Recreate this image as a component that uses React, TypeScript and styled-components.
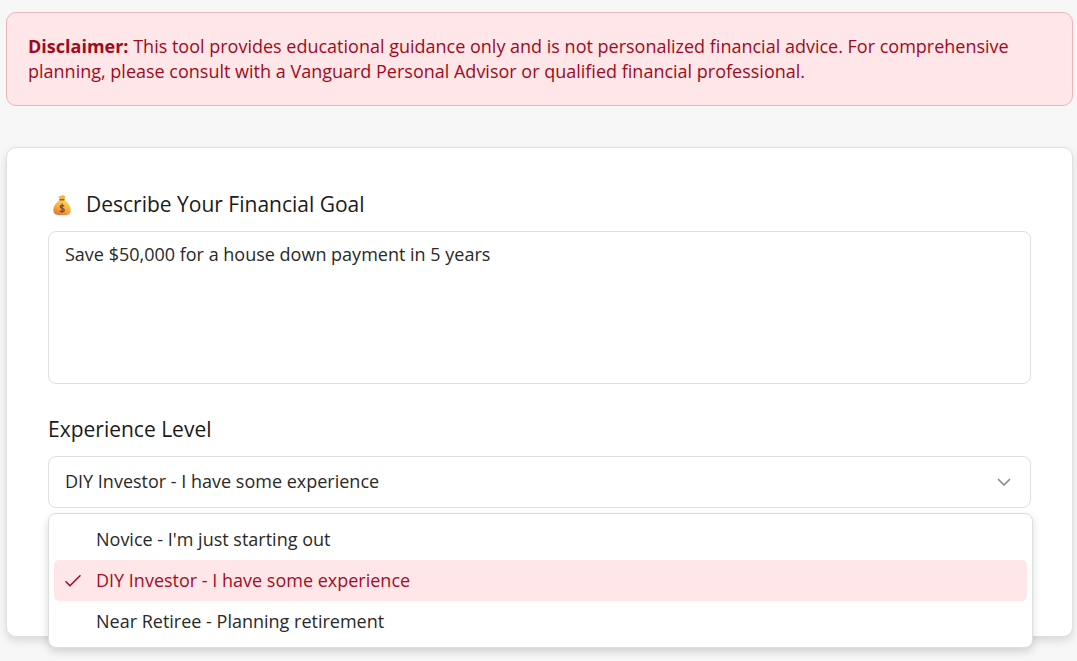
import React, { useState } from "react";
import styled, { createGlobalStyle } from "styled-components";

const GlobalStyle = createGlobalStyle`
  *, *::before, *::after { box-sizing: border-box; }
  body {
    margin: 0;
    background: #f7f7f7;
    color: #292929;
    font: 400 18px/25px "Open Sans", "Noto Sans", sans-serif;
  }
`;

const Page = styled.main`
  display: flex;
  flex-direction: column;
  gap: 41px;
  padding: 12px 4px 24px 6px;
`;

const Disclaimer = styled.p`
  margin: 0;
  padding: 21px;
  border: 1px solid #eeb4bb;
  border-radius: 10px;
  background: #ffe6e8;
  color: #9f0a20;
`;

const Card = styled.form`
  display: flex;
  flex-direction: column;
  gap: 31px;
  padding: 42px 41px 128px;
  border: 1px solid #e0e0e0;
  border-radius: 10px;
  background: #fff;
  box-shadow: 0 4px 8px rgba(0, 0, 0, 0.12);
`;

const Field = styled.div`
  display: flex;
  flex-direction: column;
  gap: 12px;
`;

const Label = styled.label`
  display: flex;
  align-items: center;
  gap: 10px;
  color: #1a1a1a;
  font-size: 21px;
  font-weight: 500;
  line-height: 29px;
`;

const GoalInput = styled.textarea`
  display: block;
  width: 100%;
  height: 153px;
  padding: 10px 16px;
  border: 1px solid #dedfe0;
  border-radius: 8px;
  outline: none;
  resize: none;
  background: #fff;
  color: inherit;
  font: inherit;
`;

const SelectBox = styled.div`
  position: relative;
  display: grid;
  align-items: center;
`;

const Select = styled.select`
  grid-area: 1 / 1;
  width: 100%;
  height: 52px;
  padding: 0 48px 2px 16px;
  border: 1px solid #dedfe0;
  border-radius: 8px;
  outline: none;
  appearance: none;
  background: #fff;
  color: inherit;
  font: inherit;
`;

const Chevron = styled.svg`
  grid-area: 1 / 1;
  justify-self: end;
  margin-right: 17px;
  pointer-events: none;
`;

const Menu = styled.div`
  position: absolute;
  top: calc(100% + 5px);
  left: 0;
  right: -2px;
  display: flex;
  flex-direction: column;
  padding: 5px;
  border: 1px solid #dedede;
  border-radius: 8px;
  background: #fff;
  box-shadow: 0 4px 8px rgba(0, 0, 0, 0.15);
`;

const MenuItem = styled.button<{ $selected: boolean }>`
  display: grid;
  grid-template-columns: 20px 1fr;
  align-items: center;
  column-gap: 14px;
  padding: 8px;
  border: 0;
  border-radius: 5px;
  background: ${({ $selected }) => ($selected ? "#ffe6e8" : "transparent")};
  color: ${({ $selected }) => ($selected ? "#a30d24" : "inherit")};
  font: inherit;
  text-align: left;
  cursor: pointer;
`;

const ItemText = styled.span`
  grid-column: 2;
`;

const MoneyBag = () => (
  <svg width="28" height="28" viewBox="0 0 28 28" aria-hidden="true">
    <defs>
      <linearGradient id="bag" x1="0.8" y1="0.1" x2="0.35" y2="1">
        <stop offset="0" stopColor="#ffd34f" />
        <stop offset="0.55" stopColor="#f8ad38" />
        <stop offset="1" stopColor="#e47b3d" />
      </linearGradient>
    </defs>
    <path d="M10.5 5.5c1.2.3 2-.2 2.5-1.2.8.4 1.5.2 2.1-.5.2.9.8 1.4 2.4 1.4l-1.6 4h-3.8z" fill="#f8b239" />
    <path d="M12 9h4c3.4 2 6.7 5.700 6.700 10.100 0 3.500-1.800 4.900-4.700 4.900h-8c-2.900 0-4.700-1.500-4.700-4.900C5.300 14.700 8.600 11 12 9z" fill="url(#bag)" />
    <path d="M12 8.700h4" stroke="#a65b45" strokeWidth="1.600" strokeLinecap="round" />
    <path d="M16.200 15.100c-.6-1-3.900-1.300-4 .7-.1 2.100 4.100 1.200 4.100 3.400 0 2-3.700 1.900-4.500.5M14.100 12.600v9.200" fill="none" stroke="#81483d" strokeWidth="1.300" />
  </svg>
);

const levels = [
  "Novice - I'm just starting out",
  "DIY Investor - I have some experience",
  "Near Retiree - Planning retirement",
];

export default function App() {
  const [goal, setGoal] = useState("Save $50,000 for a house down payment in 5 years");
  const [level, setLevel] = useState(levels[1]);
  const [open, setOpen] = useState(true);

  return (
    <>
      <GlobalStyle />
      <Page>
        <Disclaimer>
          <strong>Disclaimer:</strong> This tool provides educational guidance only and is not
          personalized financial advice. For comprehensive planning, please consult with a Vanguard
          Personal Advisor or qualified financial professional.
        </Disclaimer>
        <Card onSubmit={(e) => e.preventDefault()}>
          <Field>
            <Label htmlFor="goal">
              <MoneyBag />
              Describe Your Financial Goal
            </Label>
            <GoalInput
              id="goal"
              spellCheck={false}
              value={goal}
              onChange={(e) => setGoal(e.target.value)}
            />
          </Field>
          <Field>
            <Label htmlFor="level">Experience Level</Label>
            <SelectBox>
              <Select
                id="level"
                value={level}
                onChange={(e) => setLevel(e.target.value)}
                onMouseDown={(e) => {
                  e.preventDefault();
                  setOpen(!open);
                }}
              >
                {levels.map((name) => (
                  <option key={name}>{name}</option>
                ))}
              </Select>
              <Chevron width="20" height="20" viewBox="0 0 20 20" aria-hidden="true">
                <path
                  d="M4.500 7.500l5.500 5.500 5.500-5.500"
                  fill="none"
                  stroke="#8a8a8a"
                  strokeWidth="1.700"
                  strokeLinecap="round"
                  strokeLinejoin="round"
                />
              </Chevron>
              {open && (
                <Menu role="listbox" aria-label="Experience Level">
                  {levels.map((name) => (
                    <MenuItem
                      key={name}
                      type="button"
                      role="option"
                      aria-selected={name === level}
                      $selected={name === level}
                      onClick={() => {
                        setLevel(name);
                        setOpen(false);
                      }}
                    >
                      {name === level && (
                        <svg width="20" height="20" viewBox="0 0 20 20" aria-hidden="true">
                          <path
                            d="M4 10.800l4 4 10-10"
                            fill="none"
                            stroke="currentColor"
                            strokeWidth="1.600"
                            strokeLinecap="round"
                            strokeLinejoin="round"
                          />
                        </svg>
                      )}
                      <ItemText>{name}</ItemText>
                    </MenuItem>
                  ))}
                </Menu>
              )}
            </SelectBox>
          </Field>
        </Card>
      </Page>
    </>
  );
}
